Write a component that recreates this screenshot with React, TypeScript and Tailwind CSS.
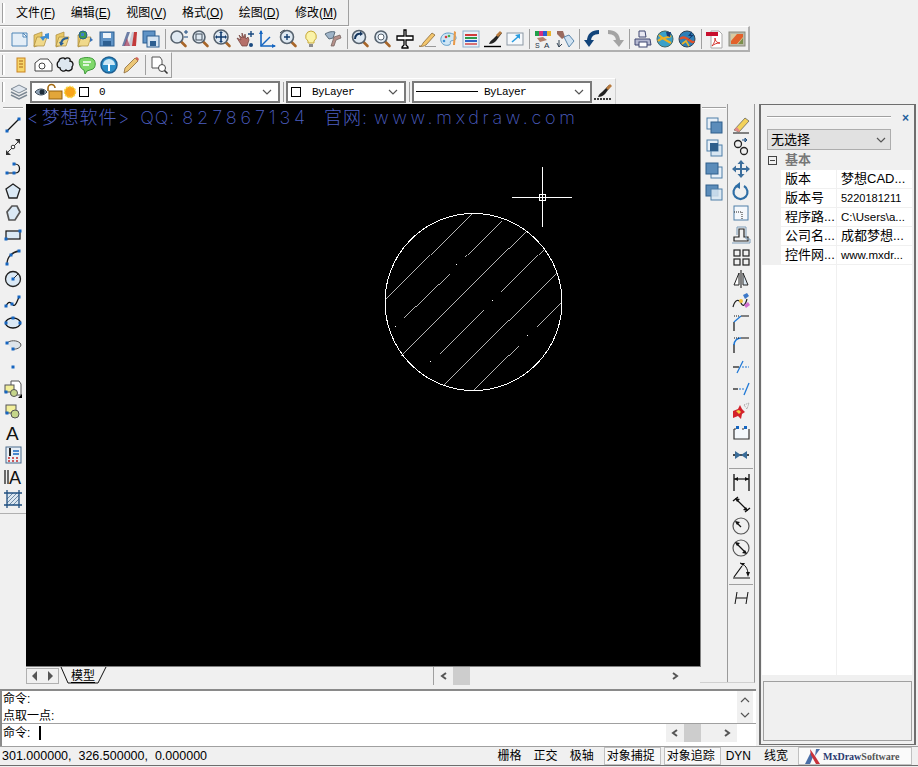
import type { ReactNode } from 'react';

const sans = "font-['Liberation_Sans','Noto_Sans_CJK_SC',sans-serif]";

const S = ({ children }: { children: ReactNode }) => (
  <svg width="20" height="20" viewBox="0 0 20 20" fill="none">
    {children}
  </svg>
);

const Node = ({ x, y }: { x: number; y: number }) => <rect x={x - 1.5} y={y - 1.5} width="3" height="3" fill="#1565c0" />;

const Mag = ({ children, r = 6 }: { children?: ReactNode; r?: number }) => (
  <>
    <path d="M11.5 12l5 5" stroke="#a8662a" strokeWidth="2.6" strokeLinecap="round" />
    <circle cx="8" cy="8" r={r} fill="#dfe9f2" stroke="#56626e" strokeWidth="1.6" />
    {children}
  </>
);

const Folder = ({ children }: { children?: ReactNode }) => (
  <>
    <path d="M3 6l8-3v12l-8 3z" fill="#e8c868" stroke="#a98a3a" strokeWidth=".7" />
    <path d="M6 8h10l-3 9H3z" fill="#f0d98a" stroke="#a98a3a" strokeWidth=".7" />
    {children}
  </>
);

const Floppy = () => (
  <>
    <rect x="3" y="3" width="14" height="14" fill="#5f93c6" stroke="#2d5f91" />
    <rect x="6" y="4" width="8" height="5" fill="#eef4fa" />
    <rect x="6" y="12" width="8" height="5" fill="#2d5f91" />
  </>
);

const icons: Record<string, ReactNode> = {
  newDoc: (<><path d="M3 4h15v13H3z" fill="#e4eef7" stroke="#4f86b8" /><path d="M14 4l4 4h-4z" fill="#fff" stroke="#4f86b8" /></>),
  open: (<Folder><path d="M18 4l-4 1v2l-5 1 3 4 2-3 4 1z" fill="#3d8fd6" /></Folder>),
  openOld: (<Folder><path d="M8 16c0-5 3-7 7-7" stroke="#2a5f96" strokeWidth="2" /><path d="M6 13l2 4 3-3z" fill="#2a5f96" /></Folder>),
  web: (<Folder><circle cx="8" cy="6" r="4" fill="#3f9a4f" stroke="#245f8f" /><path d="M6 4h3v3H6z" fill="#3d7fcc" /><path d="M15 8l3 3-3 2z" fill="#3b73b5" /></Folder>),
  save: (<Floppy />),
  plot: (<><path d="M3 17L8 3h3L6 17z" fill="#6d7fa6" /><path d="M9 17l4-14h2l-1 14z" fill="#c9ccd6" /><path d="M13 17L15 3h3l-1 14z" fill="#c23a3a" /><path d="M5 17L8 9l3 8z" fill="#a53a5a" opacity=".7" /></>),
  saveAs: (<><rect x="2" y="2" width="12" height="12" fill="#5f93c6" stroke="#2d5f91" /><rect x="6" y="7" width="12" height="11" fill="#d5e4f2" stroke="#2d5f91" /><rect x="9" y="12" width="6" height="5" fill="#2d5f91" /></>),
  zoomPM: (<Mag><path d="M15 3h4M17 1v4M15 8h4" stroke="#1a4a80" /></Mag>),
  zoomWin: (<Mag><rect x="5" y="5" width="6" height="6" stroke="#44505c" /></Mag>),
  zoomPan: (<Mag r={7}><path d="M8 3v10M3 8h10" stroke="#123d70" strokeWidth="1.6" /><path d="M8 2l-2 2h4zM8 14l-2-2h4zM2 8l2-2v4zM14 8l-2-2v4z" fill="#123d70" /></Mag>),
  hand: (<><path d="M2 9l4 2-2-5 3 3V4l2 5 1-4 1 5 2-2 1 3-2 6H7z" fill="#b5706a" stroke="#6d3d3a" strokeWidth=".7" /><path d="M16 2v6M13 5h6" stroke="#1a4a80" strokeWidth="1.4" /><circle cx="16" cy="16" r="2" fill="#1a4a80" /></>),
  ucs: (<><path d="M4 2v15h14" stroke="#1565c0" strokeWidth="1.6" /><path d="M4 17L13 8" stroke="#1565c0" strokeWidth="1.4" /><path d="M4 1l-2 4h4zM19 17l-4-2v4z" fill="#1565c0" /></>),
  zoomC: (<Mag r={6.5}><path d="M8 5v6M5 8h6" stroke="#123d70" strokeWidth="1.4" /><path d="M1 4a9 9 0 0 1 5-3" stroke="#44505c" /></Mag>),
  bulb: (<><path d="M10 2a5.5 5.5 0 0 0-3 10v2h6v-2a5.5 5.5 0 0 0-3-10z" fill="#fbf3a8" stroke="#c7a93a" /><rect x="8" y="15" width="4" height="3" fill="#8d8d8d" /></>),
  lamp: (<><path d="M2 5c3-2 7-3 10-2l-2 6-4 1z" fill="#9fb4c8" stroke="#5c6d7c" /><path d="M11 8l6-2 1 3-5 2-2 6H8z" fill="#b5908a" stroke="#6d5d5a" strokeWidth=".7" /></>),
  zoomBack: (<Mag r={6.5}><path d="M4 10c0-4 3-6 6-5" stroke="#14365e" strokeWidth="2" /><path d="M9 2l3 3-3 2z" fill="#14365e" /></Mag>),
  zoomPlain: (<Mag><circle cx="8" cy="8" r="3" fill="#fff" stroke="#56626e" /></Mag>),
  pan: (<><path d="M9 1h2v6h7v4h-7v5l2 2v1H7v-1l2-2v-5H2V7h7z" fill="#fff" stroke="#000" strokeWidth="1.3" /></>),
  pencilLine: (<><path d="M2 17c2 1 3-1 4-3L15 4l3 2-9 10c-2 1-4 2-7 1z" fill="#f3c66d" stroke="#7b5a2a" strokeWidth=".7" /><path d="M8 17.5h11" stroke="#999" /></>),
  palette: (<><path d="M9 4c-5 0-8 4-7 8s5 5 8 4 0-3 2-4 5 0 5-3-3-5-8-5z" fill="#cfe6f5" stroke="#5c9cc9" /><circle cx="7" cy="8" r="1.3" fill="#d43c3c" /><circle cx="5" cy="12" r="1.3" fill="#3c8fd4" /><circle cx="10" cy="7" r="1.3" fill="#4caf50" /><path d="M15 2l2 1-1 13h-2z" fill="#e89a4a" /></>),
  layersCard: (<><rect x="2" y="2" width="16" height="16" fill="#e9f1f8" stroke="#8fb0cc" /><path d="M4 6h12" stroke="#d23c3c" strokeWidth="2" /><path d="M4 9h12" stroke="#2f9a4d" strokeWidth="2" /><path d="M4 12h12" stroke="#2d63c6" strokeWidth="2" /><path d="M4 15h12" stroke="#d23c3c" strokeWidth="1.4" /></>),
  brushLine: (<><path d="M1 17.5h17" stroke="#000" strokeWidth="1.4" /><path d="M6 15c1-3 3-4 4-5l7-7 2 1-6 8c-2 2-4 3-7 3z" fill="#222" /><path d="M13 6l4-4 2 2-4 4z" fill="#b87a3d" /></>),
  boxArrow: (<><rect x="2" y="4" width="16" height="12" fill="#f6f9fc" stroke="#8c97a3" /><path d="M7 13l7-6" stroke="#2a9de0" strokeWidth="1.6" /><path d="M15 5v5l-5-4z" fill="#2a9de0" /></>),
  colorText: (<><path d="M2 2h16v5H2z" fill="#d62f7f" /><path d="M2 2h4v5H2z" fill="#21a04a" /><path d="M10 2h4v5h-4z" fill="#2b5fd0" /><path d="M14 2h4v5h-4z" fill="#e9b32a" /><path d="M4 9l6-1 4 3-7 2z" fill="#b5806a" /><text x="2" y="19" fontSize="7" fill="#234">S</text><text x="11" y="19" fontSize="8" fill="#234">A</text></>),
  handTag: (<><path d="M2 2h6l2 6-3 2-5-5z" fill="#9a6a5e" /><path d="M9 8l5-2 5 6-5 6z" fill="#cfe2f2" stroke="#5a86ac" /><path d="M4 11v7M2 14l2 4 3-3" stroke="#345" /></>),
  undo: (<><path d="M16 3c-6 0-10 3-10 9" stroke="#12447a" strokeWidth="4" /><path d="M1 11h10l-5 7z" fill="#12447a" /></>),
  redo: (<><path d="M3 3c6 0 10 3 10 9" stroke="#a4a4a4" strokeWidth="4" /><path d="M19 11H8l6 7z" fill="#a4a4a4" /></>),
  printer: (<><path d="M6 2h6l1 6H6z" fill="#e8e8f2" stroke="#3e4770" /><path d="M2 10h15l1 6H2z" fill="#b4b8d0" stroke="#3e4770" /><rect x="6" y="13" width="8" height="5" fill="#fff" stroke="#3e4770" /></>),
  globeA: (<><circle cx="10" cy="10" r="8" fill="#3aa0c8" stroke="#466" /><path d="M3 12c4-4 9-3 13-5M4 6c4 4 8 6 12 8" stroke="#f0b020" strokeWidth="2" /><path d="M11 3h5l-1 5-3-1z" fill="#1b3f7a" /></>),
  globeB: (<><circle cx="10" cy="10" r="8" fill="#2d7fb8" stroke="#345" /><path d="M3 10c3-3 6-1 9 1s4 3 5 1" stroke="#e0502a" strokeWidth="2.4" /><path d="M5 15l4-3 3 5" stroke="#e9b32a" strokeWidth="1.6" /><path d="M15 2l-4 5h3l-3 4 6-5h-3z" fill="#103a70" /></>),
  pdf: (<><path d="M6 2h8l3 3v14H6z" fill="#fff" stroke="#aaa" /><rect x="1" y="3" width="12" height="4" fill="#c8102e" /><path d="M7 17c3-4 3-6 3-8 0 3 2 5 5 5-3 0-6 1-8 3z" stroke="#d4302a" /></>),
  picture: (<><rect x="2" y="3" width="16" height="14" fill="#b9b9a8" stroke="#8a8a80" /><rect x="4" y="5" width="12" height="10" fill="#d9c9a0" /><path d="M4 12l6-7h6v3l-6 7H4z" fill="#e2602a" /><path d="M11 15l5-6v6z" fill="#7a8f4a" /></>),
  note: (<><rect x="6" y="3" width="8" height="14" fill="#f7d66a" stroke="#c98320" /><path d="M8 6h4M8 9h4M8 12h4" stroke="#a8641a" /></>),
  polyCloudBox: (<><path d="M2 8l5-4h8l4 5v7H2z" fill="#fff" stroke="#444" /><circle cx="9" cy="11" r="3" stroke="#444" /></>),
  cloud: (<path d="M4 6c0-3 5-4 6-2 2-2 6-1 5 2 3 0 4 4 2 6 1 3-4 5-6 3-2 2-6 1-6-2-3 0-4-5-1-7z" fill="#dde7f0" stroke="#111" strokeWidth="1.3" />),
  chat: (<><path d="M3 4c4-2 10-2 13 0s3 8 0 10l-6 2-2 3 -1-4C3 14 1 7 3 4z" fill="#7fd86a" stroke="#3f9a3a" /><path d="M6 7h8M6 10h6" stroke="#fff" strokeWidth="1.5" /></>),
  dial: (<><circle cx="10" cy="10" r="8" fill="#2b8fc9" stroke="#1f5f91" strokeWidth="1.5" /><path d="M4 10a6 6 0 0 1 12 0z" fill="#cfe9f6" /><path d="M10 9v7" stroke="#fff" strokeWidth="2" /></>),
  pencil: (<><path d="M3 18l1-5L14 3l3 3L7 16z" fill="#ecc777" stroke="#8a6a3a" strokeWidth=".8" /><path d="M14 3l3 3 1-2-2-2z" fill="#d2655a" /></>),
  docMag: (<><path d="M3 2h8l2 3v8H3z" fill="#fff" stroke="#555" /><circle cx="13" cy="13" r="3.5" fill="#fff" stroke="#444" /><path d="M15.5 15.5l3 3" stroke="#333" strokeWidth="1.6" /></>),
  layers: (<><path d="M10 3l8 4-8 4-8-4z" fill="#dfe6ee" stroke="#7c8894" /><path d="M2 10l8 4 8-4" stroke="#7c8894" strokeWidth="1.5" /><path d="M2 13l8 4 8-4" stroke="#7c8894" strokeWidth="1.5" /></>),
  lineBrush: (<><path d="M1 17h17" stroke="#000" strokeWidth="1.6" strokeDasharray="2 1" /><path d="M5 15c1-3 3-4 4-5l7-7 2 1-6 8c-2 2-4 3-7 3z" fill="#222" /><path d="M13 6l4-4 2 2-4 4z" fill="#b87a3d" /></>),
  // left toolbar
  line: (<><path d="M4 16L16 4" stroke="#111" strokeWidth="1.2" /><Node x={4} y={16} /><Node x={16} y={4} /></>),
  xline: (<><path d="M3 17L17 3" stroke="#333" /><path d="M17 2v5l-5-5zM3 18v-5l5 5z" fill="#333" /><circle cx="10" cy="10" r="1.8" fill="#fff" stroke="#333" /></>),
  pline: (<><path d="M4 14h8c6 0 6-9 0-9" stroke="#111" strokeWidth="1.2" /><Node x={4} y={14} /><Node x={11} y={14} /><Node x={11} y={5} /></>),
  polygon: (<path d="M10 3l7 5-3 9H6L3 8z" fill="#dbe9f5" stroke="#222" strokeWidth="1.3" />),
  polygon2: (<path d="M9 3h5l3 6-5 8H6L4 9z" fill="#dbe9f5" stroke="#555" strokeWidth="1.7" />),
  rectangle: (<><rect x="3" y="6" width="14" height="8" fill="#dbe9f5" stroke="#111" strokeWidth="1.2" /><Node x={3} y={14} /><Node x={17} y={6} /></>),
  arc: (<><path d="M4 17C4 10 9 5 16 4" stroke="#222" strokeWidth="1.3" /><Node x={4} y={17} /><Node x={8} y={8} /><Node x={16} y={4} /></>),
  circle: (<><circle cx="10" cy="10" r="7.5" fill="#dbe9f5" stroke="#222" strokeWidth="1.3" /><path d="M10 10l5-5" stroke="#222" /><Node x={10} y={10} /></>),
  spline: (<><path d="M3 15c3-6 5-3 7-1s4-3 6-8" stroke="#111" strokeWidth="1.2" /><Node x={3} y={15} /><Node x={9} y={13} /><Node x={16} y={6} /></>),
  ellipse: (<><ellipse cx="10" cy="10" rx="7.5" ry="5" fill="#dbe9f5" stroke="#111" strokeWidth="1.3" /><Node x={3} y={10} /><Node x={10} y={5} /><Node x={17} y={10} /></>),
  ellipseArc: (<><path d="M4 8c3-3 10-3 13 0s-2 7-8 6" fill="#dde4ea" stroke="#555" /><Node x={4} y={8} /><Node x={10} y={14} /></>),
  point: (<Node x={10} y={10} />),
  block: (<><path d="M8 2h8l2 3v11H8z" fill="#fff" stroke="#555" /><rect x="2" y="6" width="9" height="7" fill="#f2ef9a" stroke="#555" /><circle cx="11" cy="14" r="3.5" fill="#c5d58a" stroke="#555" /><Node x={3} y={13} /><path d="M15 19l4-4v4z" fill="#000" /></>),
  insert: (<><rect x="3" y="4" width="10" height="8" fill="#f2ef9a" stroke="#555" /><circle cx="12" cy="13" r="4" fill="#c5d58a" stroke="#555" /><Node x={4} y={12} /></>),
  mtext: (<text x="3" y="17" fontSize="19" fill="#111" fontFamily="Liberation Sans">A</text>),
  table: (<><rect x="3" y="2" width="15" height="16" fill="#e8eff6" stroke="#496a8c" /><path d="M7 3v8" stroke="#222" strokeWidth="2" /><path d="M5 13h2M9 13h2M13 13h2M5 16h2M9 16h2M13 16h2" stroke="#c2282a" strokeWidth="1.5" /><path d="M10 6h6M10 9h6" stroke="#1565c0" strokeWidth="1.5" /></>),
  attText: (<><path d="M2 3v14M5 3v14" stroke="#222" strokeWidth="1.3" /><text x="6" y="17" fontSize="18" fill="#111" fontFamily="Liberation Sans">A</text></>),
  hatch: (<><rect x="4" y="4" width="12" height="12" fill="#dbe6f0" /><path d="M4 10l6-6M4 14l10-10M6 16L16 6M10 16l6-6" stroke="#6d8aa6" /><path d="M1 4h18M1 16h18M4 1v18M16 1v18" stroke="#1f4f80" strokeWidth="1.3" /></>),
  // right toolbar
  front: (<><rect x="3" y="2" width="11" height="11" fill="#e8f0f8" stroke="#4e7fa8" /><rect x="7" y="6" width="11" height="11" fill="#5b8cba" stroke="#2f5f8c" /></>),
  back: (<><rect x="7" y="7" width="11" height="11" fill="#d8e6f2" stroke="#4e7fa8" /><rect x="3" y="2" width="11" height="11" fill="#e8f0f8" stroke="#4e7fa8" /><rect x="6" y="5" width="8" height="8" fill="#2f5f8c" /></>),
  above: (<><rect x="7" y="7" width="11" height="11" fill="#e8f0f8" stroke="#4e7fa8" /><rect x="2" y="3" width="12" height="11" fill="#5b8cba" stroke="#2f5f8c" /></>),
  under: (<><rect x="2" y="3" width="12" height="11" fill="#5b8cba" stroke="#2f5f8c" /><rect x="7" y="7" width="11" height="11" fill="#d8e6f2" fillOpacity=".85" stroke="#4e7fa8" /></>),
  erase: (<><path d="M2 18h16" stroke="#111" /><path d="M3 15L14 3l4 3L8 17z" fill="#f3d25a" stroke="#555" strokeWidth=".7" /><path d="M3 15l3-3 3 4-1 1z" fill="#e28a8a" /></>),
  copy: (<><circle cx="13" cy="14" r="3.5" stroke="#222" strokeWidth="1.3" /><circle cx="7" cy="7" r="3.5" stroke="#222" strokeWidth="1.3" /><path d="M11 3h5M16 3l-2-2v4z" stroke="#1f4f80" /></>),
  move: (<path d="M10 1l3.5 4H11v4h4V6.500l4 3.500-4 3.500V11h-4v4h2.500L10 19l-3.500-4H9v-4H5v2.500L1 10l4-3.500V9h4V5H6.500z" fill="#3c6e9c" />),
  rotate: (<><path d="M6 5a7 7 0 1 0 7 0" stroke="#2f6ea5" strokeWidth="2.2" /><path d="M9 1v7l-5-3z" fill="#2f6ea5" /></>),
  scale: (<><rect x="3" y="3" width="14" height="14" fill="#f4f8fc" stroke="#4e7fa8" /><path d="M3 9h8v8" stroke="#222" strokeDasharray="1 1" /></>),
  offset: (<><path d="M3 16h14v-4h-4V4H8v8H3z" stroke="#222" strokeWidth="1.2" /><path d="M1 18h18v-4h-4V2H6v8" stroke="#7d9cb8" /></>),
  array: (<><rect x="3" y="3" width="6" height="6" stroke="#222" strokeWidth="1.2" /><rect x="12" y="3" width="6" height="6" stroke="#222" strokeWidth="1.2" /><rect x="3" y="12" width="6" height="6" stroke="#222" strokeWidth="1.2" /><rect x="12" y="12" width="6" height="6" stroke="#222" strokeWidth="1.2" /></>),
  mirror: (<><path d="M10 1v18" stroke="#111" /><path d="M8 4L3 16h5z" fill="#fff" stroke="#222" /><path d="M12 4l5 12h-5z" fill="#dce8f2" stroke="#222" /></>),
  stretch: (<><path d="M2 16c2-8 6-8 8-4s4 3 6-4" stroke="#222" strokeWidth="1.2" /><path d="M12 4l4-2 2 3-4 3z" fill="#3c78c8" /><path d="M13 14l4-3 2 3-4 3z" fill="#d070d0" /><circle cx="10" cy="10" r="2" fill="#f0c040" /></>),
  chamfer: (<><path d="M3 18v-9M10 3h8" stroke="#111" strokeWidth="1.2" /><path d="M3 9l7-6" stroke="#1f78d6" strokeWidth="1.3" /><path d="M3 3h5" stroke="#111" strokeDasharray="1 1" /></>),
  fillet: (<><path d="M3 18V9M10 3h8" stroke="#111" strokeWidth="1.2" /><path d="M3 10C3 6 6 3 10 3" stroke="#1f78d6" strokeWidth="1.6" /><path d="M3 3h5" stroke="#111" strokeDasharray="1 1" /></>),
  trim: (<><path d="M2 10h6" stroke="#111" strokeWidth="1.2" /><path d="M11 10h7" stroke="#1f78d6" strokeDasharray="2 1" /><path d="M6 16l6-12" stroke="#1f78d6" strokeWidth="1.3" /></>),
  extend: (<><path d="M2 10h5" stroke="#111" strokeWidth="1.2" /><path d="M8 10h5" stroke="#1f78d6" strokeDasharray="2 1" /><path d="M13 16l5-12" stroke="#1f78d6" strokeWidth="1.3" /></>),
  explode: (<><path d="M2 10l5-2 2-4 2 4 3 3-3 2-1 5-3-3-5 2z" fill="#d3222a" /><path d="M5 10l3-1 2 2-2 2z" fill="#f6d040" /><path d="M13 4l5-2-2 6z" stroke="#999" strokeDasharray="1 1" /></>),
  break: (<><path d="M3 6v10h15V6" fill="#f4f8fc" stroke="#333" strokeWidth="1.2" /><path d="M3 6h15" stroke="#333" strokeDasharray="2 6" /><rect x="5" y="3" width="3" height="3" fill="#1565c0" /><rect x="13" y="3" width="3" height="3" fill="#1565c0" /></>),
  join: (<><path d="M2 10h16" stroke="#111" strokeWidth="1.5" /><path d="M4 6l6 4-6 4zM16 6l-6 4 6 4z" fill="#3b6d99" /></>),
  dimLinear: (<><path d="M3 2v17M18 2v17" stroke="#111" strokeWidth="1.3" /><path d="M3 7h15" stroke="#111" strokeWidth="1.2" /><path d="M3 7l4-2v4zM18 7l-4-2v4z" fill="#111" /></>),
  dimAligned: (<><path d="M2 7l5-4M14 18l5-4" stroke="#111" strokeWidth="1.3" /><path d="M5 5l11 11" stroke="#111" strokeWidth="1.2" /><path d="M4 4l5 1-3 3zM17 17l-5-1 3-3z" fill="#111" /></>),
  dimRadius: (<><circle cx="10" cy="10" r="8" stroke="#555" strokeWidth="1.2" /><path d="M5 6l5 5" stroke="#111" strokeWidth="1.2" /><path d="M4 5l5 1-3 3z" fill="#111" /></>),
  dimDiameter: (<><circle cx="10" cy="10" r="8" stroke="#555" strokeWidth="1.2" /><path d="M5 5l10 10" stroke="#111" strokeWidth="1.2" /><path d="M4 4l5 1-3 3zM16 16l-5-1 3-3z" fill="#111" /></>),
  dimAngle: (<><path d="M2 18h17M3 17L11 6" stroke="#111" strokeWidth="1.2" /><path d="M9 3c5 1 8 6 8 11" stroke="#111" /><path d="M17 17l-2-5h4zM9 3l5 0-2 3z" fill="#111" /></>),
  dimOblique: (<><path d="M6 4L4 16M17 4l-2 12" stroke="#111" /><path d="M5 10h11" stroke="#111" /></>),
};

const Ic = ({ name, className = 'w-[22px]' }: { name: string; className?: string }) => (
  <div className={`${className} h-[22px] flex items-center justify-center shrink-0`}>
    <S>{icons[name]}</S>
  </div>
);

const Grip = () => <div className="w-[3px] h-[20px] ml-[2px] mr-[3px] border-l border-[#a0a0a0] border-r-2 border-r-white shrink-0" />;
const Sep = () => <div className="w-[6px] h-[20px] shrink-0 flex justify-center"><div className="w-[1px] h-full bg-[#a0a0a0]" /></div>;

const Chevron = ({ d = 'M1 1l4 4 4-4', cls = '' }: { d?: string; cls?: string }) => (
  <svg width="10" height="6" viewBox="0 0 10 6" fill="none" className={cls}>
    <path d={d} stroke="#555" strokeWidth="1.2" />
  </svg>
);

const ScrollChev = ({ d }: { d: string }) => (
  <svg width="8" height="8" viewBox="0 0 8 8" fill="none" className="shrink-0">
    <path d={d} stroke="#555" strokeWidth="2" />
  </svg>
);

const Combo = ({ className, children }: { className: string; children: ReactNode }) => (
  <div className={`${className} h-[22px] bg-white border-2 border-[#7a7a7a] flex items-center shrink-0`}>
    {children}
    <Chevron cls="ml-auto mr-[6px]" />
  </div>
);

const rows = [
  ['版本', '梦想CAD...', 'text-[13px]'],
  ['版本号', '5220181211', 'text-[11px]'],
  ['程序路...', 'C:\\Users\\a...', 'text-[11.5px]'],
  ['公司名...', '成都梦想...', 'text-[13px]'],
  ['控件网...', 'www.mxdr...', 'text-[11.5px]'],
];

const hatchLines = [
  [385.5, 299.5, 471.5, 213.5],
  [465.5, 256.5, 501.5, 220.5],
  [403.5, 317.5, 449.5, 273.5],
  [401.5, 355.5, 526.5, 230.5],
  [501.5, 291.5, 543.5, 249.5],
  [439.5, 353.5, 483.5, 309.5],
  [443.5, 385.5, 556.5, 272.5],
  [536.5, 326.5, 561.5, 301.5],
  [474.5, 389.5, 518.5, 345.5],
];
const dots = [[456, 264], [492, 300], [395, 326], [527, 335], [430, 361]];

const menu = [['文件(', 'F'], ['编辑(', 'E'], ['视图(', 'V'], ['格式(', 'O'], ['绘图(', 'D'], ['修改(', 'M']];
const leftTools = ['line', 'xline', 'pline', 'polygon', 'polygon2', 'rectangle', 'arc', 'circle', 'spline', 'ellipse', 'ellipseArc', 'point', 'block', 'insert', 'mtext', 'table', 'attText', 'hatch'];
const orderTools = ['front', 'back', 'above', 'under'];
const modifyTools = ['erase', 'copy', 'move', 'rotate', 'scale', 'offset', 'array', 'mirror', 'stretch', 'chamfer', 'fillet', 'trim', 'extend', 'explode', 'break', 'join'];
const dimTools = ['dimLinear', 'dimAligned', 'dimRadius', 'dimDiameter', 'dimAngle'];
const stdGroups = [
  ['newDoc', 'open', 'openOld', 'web', 'save', 'plot', 'saveAs'],
  ['zoomPM', 'zoomWin', 'zoomPan', 'hand', 'ucs', 'zoomC', 'bulb', 'lamp'],
  ['zoomBack', 'zoomPlain', 'pan', 'pencilLine', 'palette', 'layersCard', 'brushLine', 'boxArrow'],
  ['colorText', 'handTag'],
  ['undo', 'redo'],
  ['printer', 'globeA', 'globeB'],
  ['pdf', 'picture'],
];

export default function App() {
  return (
    <div className={`w-[918px] h-[767px] bg-[#f0f0f0] flex flex-col overflow-hidden text-[12px] text-black ${sans}`}>
      {/* toolbars */}
      <div className="h-[104px] flex flex-col shrink-0">
        <div className="w-[349px] h-[26px] flex items-center border-r border-b border-[#a0a0a0] shrink-0">
          <Grip />
          <div className="flex gap-[15.5px] ml-[8px] text-[12px]">
            {menu.map(([a, b]) => <span key={b}>{a}<span className="underline">{b}</span>)</span>)}
          </div>
        </div>
        <div className="w-[750px] h-[26px] flex items-center border-r-2 border-b-2 border-[#b0b0b0] border-t border-t-white shrink-0">
          <Grip />
          {stdGroups.map((g, i) => (
            <div key={i} className="flex items-center">
              {i > 0 && <Sep />}
              {g.map((n) => <Ic key={n} name={n} />)}
            </div>
          ))}
        </div>
        <div className="w-[172px] h-[26px] flex items-center border-r border-b border-[#a0a0a0] border-t border-t-white shrink-0">
          <Grip />
          <div className="w-[2px]" />
          {['note', 'polyCloudBox', 'cloud', 'chat', 'dial', 'pencil'].map((n) => <Ic key={n} name={n} />)}
          <Sep />
          <Ic name="docMag" />
        </div>
        <div className="w-[616px] h-[26px] flex items-center border-r border-[#d0d0d0] border-t border-t-white shrink-0">
          <Grip />
          <Ic name="layers" />
          <Combo className="w-[250px]">
            <svg width="64" height="18" viewBox="0 0 64 18" fill="none" className="shrink-0 ml-[1px]">
              <path d="M2 9c3-4 9-4 12 0-3 4-9 4-12 0z" fill="#8fa2b5" stroke="#3e4c5a" />
              <circle cx="9" cy="9" r="2.5" fill="#1e2c3a" />
              <path d="M15 8V5a3.5 3.500 0 0 1 7 0" stroke="#a36a12" strokeWidth="1.6" />
              <rect x="16" y="8" width="13" height="8" fill="#e2a63a" stroke="#94610e" />
              <circle cx="37" cy="9" r="5.5" fill="#f9a51a" stroke="#f6d84a" strokeDasharray="2 1" strokeWidth="1.5" />
              <rect x="46.5" y="4.5" width="9" height="9" fill="#fff" stroke="#000" />
            </svg>
            <span className="ml-[2px] pt-[1px] font-['Liberation_Mono',monospace] text-[11px]">0</span>
          </Combo>
          <Sep />
          <Combo className="w-[120px]">
            <div className="w-[10px] h-[10px] bg-white border border-black ml-[3px] shrink-0" />
            <span className="ml-[11px] pt-[1px] font-['Liberation_Mono',monospace] text-[11px] tracking-[-0.6px]">ByLayer</span>
          </Combo>
          <Sep />
          <Combo className="w-[180px]">
            <div className="w-[62px] h-[1px] bg-black ml-[2px] shrink-0" />
            <span className="ml-[6px] pt-[1px] font-['Liberation_Mono',monospace] text-[11px] tracking-[-0.6px]">ByLayer</span>
          </Combo>
          <Ic name="lineBrush" />
        </div>
      </div>

      <div className="flex h-[642px] shrink-0">
        <div className="w-[757px] flex flex-col shrink-0">
          <div className="flex h-[585px] shrink-0">
            {/* left draw toolbar */}
            <div className="w-[26px] h-[410px] flex flex-col items-center shrink-0 border-b border-[#b0b0b0]">
              <div className="w-[20px] h-[2px] mt-[3px] mb-[5px] border-t border-[#a0a0a0] border-b border-b-white shrink-0" />
              {leftTools.map((n) => <Ic key={n} name={n} />)}
            </div>

            <div className="w-[675px] flex flex-col shrink-0">
              {/* drawing area */}
              <div className="relative h-[563px] bg-black shrink-0 overflow-hidden border-r border-b border-[#808080]">
                <svg width="675" height="563" viewBox="26 104 675 563" fill="none" shapeRendering="crispEdges">
                  <circle cx="473.5" cy="302" r="88.5" stroke="#fff" />
                  {hatchLines.map((l, i) => <line key={i} x1={l[0]} y1={l[1]} x2={l[2]} y2={l[3]} stroke="#fff" strokeWidth=".7" />)}
                  {dots.map((d, i) => <rect key={i} x={d[0]} y={d[1]} width="1" height="1" fill="#fff" />)}
                  <path d="M512 197.5h60M542.5 167v60" stroke="#fff" />
                  <rect x="539.5" y="194.5" width="6" height="6" stroke="#fff" />
                </svg>
                <div className="absolute left-[1px] top-[3px] text-[#4d5fc0] text-[18px] leading-[22px] whitespace-pre font-['Inter','Noto_Sans_CJK_SC',sans-serif] font-[200] tracking-[2.9px]">
                  <span className="tracking-[0px]">{'<'}</span>
                  <span className="tracking-[1px] ml-[3px]">梦想软件</span>
                  <span className="tracking-[0px]">{'>'}</span>
                  <span className="ml-[11px] tracking-[1px]">QQ:</span>
                  <span className="ml-[7px] tracking-[3.9px]">827867134</span>
                  <span className="ml-[15px] tracking-[1px]">官网:</span>
                  <span className="ml-[6px] tracking-[3.7px]">www.mxdraw.com</span>
                </div>
              </div>
              {/* tabs + horizontal scroll */}
              <div className="h-[18px] bg-[#f0f0f0] flex items-center shrink-0">
                <div className="w-[33px] h-[16px] border border-[#b0b0b0] flex items-center justify-around shrink-0">
                  <div className="w-0 h-0 border-y-[5px] border-y-transparent border-r-[5px] border-r-[#555]" />
                  <div className="w-0 h-0 border-y-[5px] border-y-transparent border-l-[5px] border-l-[#555]" />
                </div>
                <svg width="48" height="18" viewBox="0 0 48 18" fill="none" className="shrink-0 -mr-[48px] ml-[1px]">
                  <path d="M1 0l7 16h30L46 0" stroke="#111" />
                </svg>
                <span className="ml-[11px] w-[36px] underline underline-offset-2 shrink-0">模型</span>
                <div className="ml-[326px] h-full w-[1px] bg-[#a0a0a0]" />
                <div className="w-[19px] flex justify-center"><ScrollChev d="M6 1L2 4l4 3" /></div>
                <div className="w-[17px] h-full bg-[#cdcdcd]" />
                <div className="ml-auto mr-[22px]"><ScrollChev d="M2 1l4 3-4 3" /></div>
              </div>
            </div>

            {/* modify toolbars */}
            <div className="w-[55px] h-[579px] -ml-[1px] flex shrink-0 border-r border-[#9a9a9a] border-b border-b-[#d0d0d0]">
              <div className="w-[27px] flex flex-col items-center border-r border-[#9a9a9a] shrink-0 ml-[1px] -mr-[1px]">
                <div className="w-[24px] h-[2px] mt-[3px] mb-[6px] border-t border-[#a0a0a0] border-b border-b-white shrink-0" />
                {orderTools.map((n) => <Ic key={n} name={n} />)}
              </div>
              <div className="flex-1 flex flex-col items-center pt-[10px] ml-[1px]">
                {modifyTools.map((n) => <Ic key={n} name={n} />)}
                <div className="w-[24px] h-[1px] bg-[#a0a0a0] my-[2px] shrink-0" />
                {dimTools.map((n) => <Ic key={n} name={n} />)}
                <div className="w-[24px] h-[1px] bg-[#a0a0a0] mt-[3px] mb-[2px] shrink-0" />
                <Ic name="dimOblique" />
              </div>
            </div>
          </div>

          {/* command window */}
          <div className="h-[57px] mr-[1px] flex flex-col bg-white border-t-2 border-t-[#8a8a8a] border-l-2 border-l-[#8a8a8a] shrink-0">
            <div className="h-[33px] flex border-b border-[#a0a0a0] shrink-0">
              <div className="flex-1 pl-[1px] leading-[17px] text-[12px]">
                <div>命令:</div>
                <div>点取一点:</div>
              </div>
              <div className="w-[16px] mr-[3px] bg-[#f0f0f0] flex flex-col items-center justify-around py-[1px]">
                <Chevron d="M1 5l4-4 4 4" />
                <Chevron />
              </div>
            </div>
            <div className="flex-1 flex items-start">
              <div className="flex-1 h-[17px] pl-[1px] flex items-center">
                命令:
                <div className="w-[2px] h-[14px] bg-black ml-[9px]" />
              </div>
              <div className="w-[71px] h-[18px] bg-[#f0f0f0] flex items-center">
                <div className="w-[18px] flex justify-center"><ScrollChev d="M6 1L2 4l4 3" /></div>
                <div className="w-[17px] h-full bg-[#cdcdcd]" />
                <div className="ml-auto mr-[6px]"><ScrollChev d="M2 1l4 3-4 3" /></div>
              </div>
              <div className="w-[16px] mr-[3px] h-[18px]" />
            </div>
          </div>
        </div>

        {/* properties panel */}
        <div className="w-[157px] ml-[2px] h-[641px] border-l-2 border-l-[#6e6e6e] border-r-2 border-r-[#6e6e6e] border-t border-t-[#6e6e6e] border-b border-b-[#6e6e6e] flex flex-col shrink-0">
          <div className="h-[24px] flex items-start shrink-0 pl-[6px] pt-[11px]">
            <div className="w-[124px] h-[2px] border-t border-[#a0a0a0] border-b border-b-white" />
            <span className="ml-[11px] -mt-[5px] text-[#1f5f9c] text-[12px] font-bold leading-[14px]">×</span>
          </div>
          <div className="w-[124px] h-[21px] ml-[6px] bg-[#e1e1e1] border border-[#adadad] flex items-center pl-[3px] text-[13px] shrink-0">
            <span>无选择</span>
            <Chevron cls="ml-auto mr-[4px]" />
          </div>
          <div className="h-[20px] flex items-center pl-[7px] shrink-0">
            <div className="w-[9px] h-[9px] border border-[#444] flex items-center justify-center shrink-0">
              <div className="w-[5px] h-[1px] bg-[#444]" />
            </div>
            <span className="ml-[8px] text-[13px] font-bold text-[#777]">基本</span>
          </div>
          <div className="ml-[1px] mr-[2px] flex-1 flex flex-col min-h-0">
            <div className="flex flex-col ml-[19px] shrink-0">
              {rows.map(([k, v, size]) => (
                <div key={k} className="h-[19px] flex bg-white border-b border-[#f0f0f0] shrink-0">
                  <div className="w-[56px] pl-[4px] border-r border-[#f0f0f0] leading-[18px] text-[13px] shrink-0">{k}</div>
                  <div className={`pl-[4px] leading-[18px] whitespace-nowrap overflow-hidden ${size}`}>{v}</div>
                </div>
              ))}
            </div>
            <div className="flex-1 bg-white flex">
              <div className="w-[75px] border-r border-[#f0f0f0]" />
            </div>
          </div>
          <div className="h-[60px] mx-[2px] mt-[6px] mb-[3px] border border-[#a0a0a0] bg-[#f0f0f0] shrink-0" />
        </div>
      </div>

      {/* status bar */}
      <div className="h-[20px] flex items-center border-t border-[#a0a0a0] border-b border-b-[#6e6e6e] shrink-0">
        <span className="ml-[2px] whitespace-pre text-[12.5px]">301.000000,  326.500000,  0.000000</span>
        <div className="ml-auto flex items-center h-full mr-[6px]">
          <span className="mr-[12px]">栅格</span>
          <span className="mr-[12px]">正交</span>
          <span className="mr-[10px]">极轴</span>
          <span className="w-[57px] pl-[2px] h-full border border-[#c0c0c0] bg-[#f8f8f8] mr-[3px] leading-[17px]">对象捕捉</span>
          <span className="w-[57px] pl-[2px] h-full border border-[#c0c0c0] bg-[#f8f8f8] mr-[5px] leading-[17px]">对象追踪</span>
          <span className="mr-[13px]">DYN</span>
          <span className="mr-[10px]">线宽</span>
          <div className="w-[114px] h-full border border-[#c0c0c0] bg-[#fafafa] flex items-center">
            <svg width="20" height="16" viewBox="0 0 20 16" fill="none" className="ml-[4px] shrink-0">
              <path d="M2 16L8 4l2 5-3 7z" fill="#4a6fa8" />
              <path d="M7 1l5 7 5 8h-4L8 7z" fill="#c8323a" />
              <path d="M13 1h4l-5 7z" fill="#4a6fa8" />
            </svg>
            <span className="font-['Liberation_Serif',serif] text-[10px] font-bold whitespace-nowrap text-[#2b3a70]">MxDraw<span className="text-[#555]">Software</span></span>
          </div>
        </div>
      </div>
    </div>
  );
}
